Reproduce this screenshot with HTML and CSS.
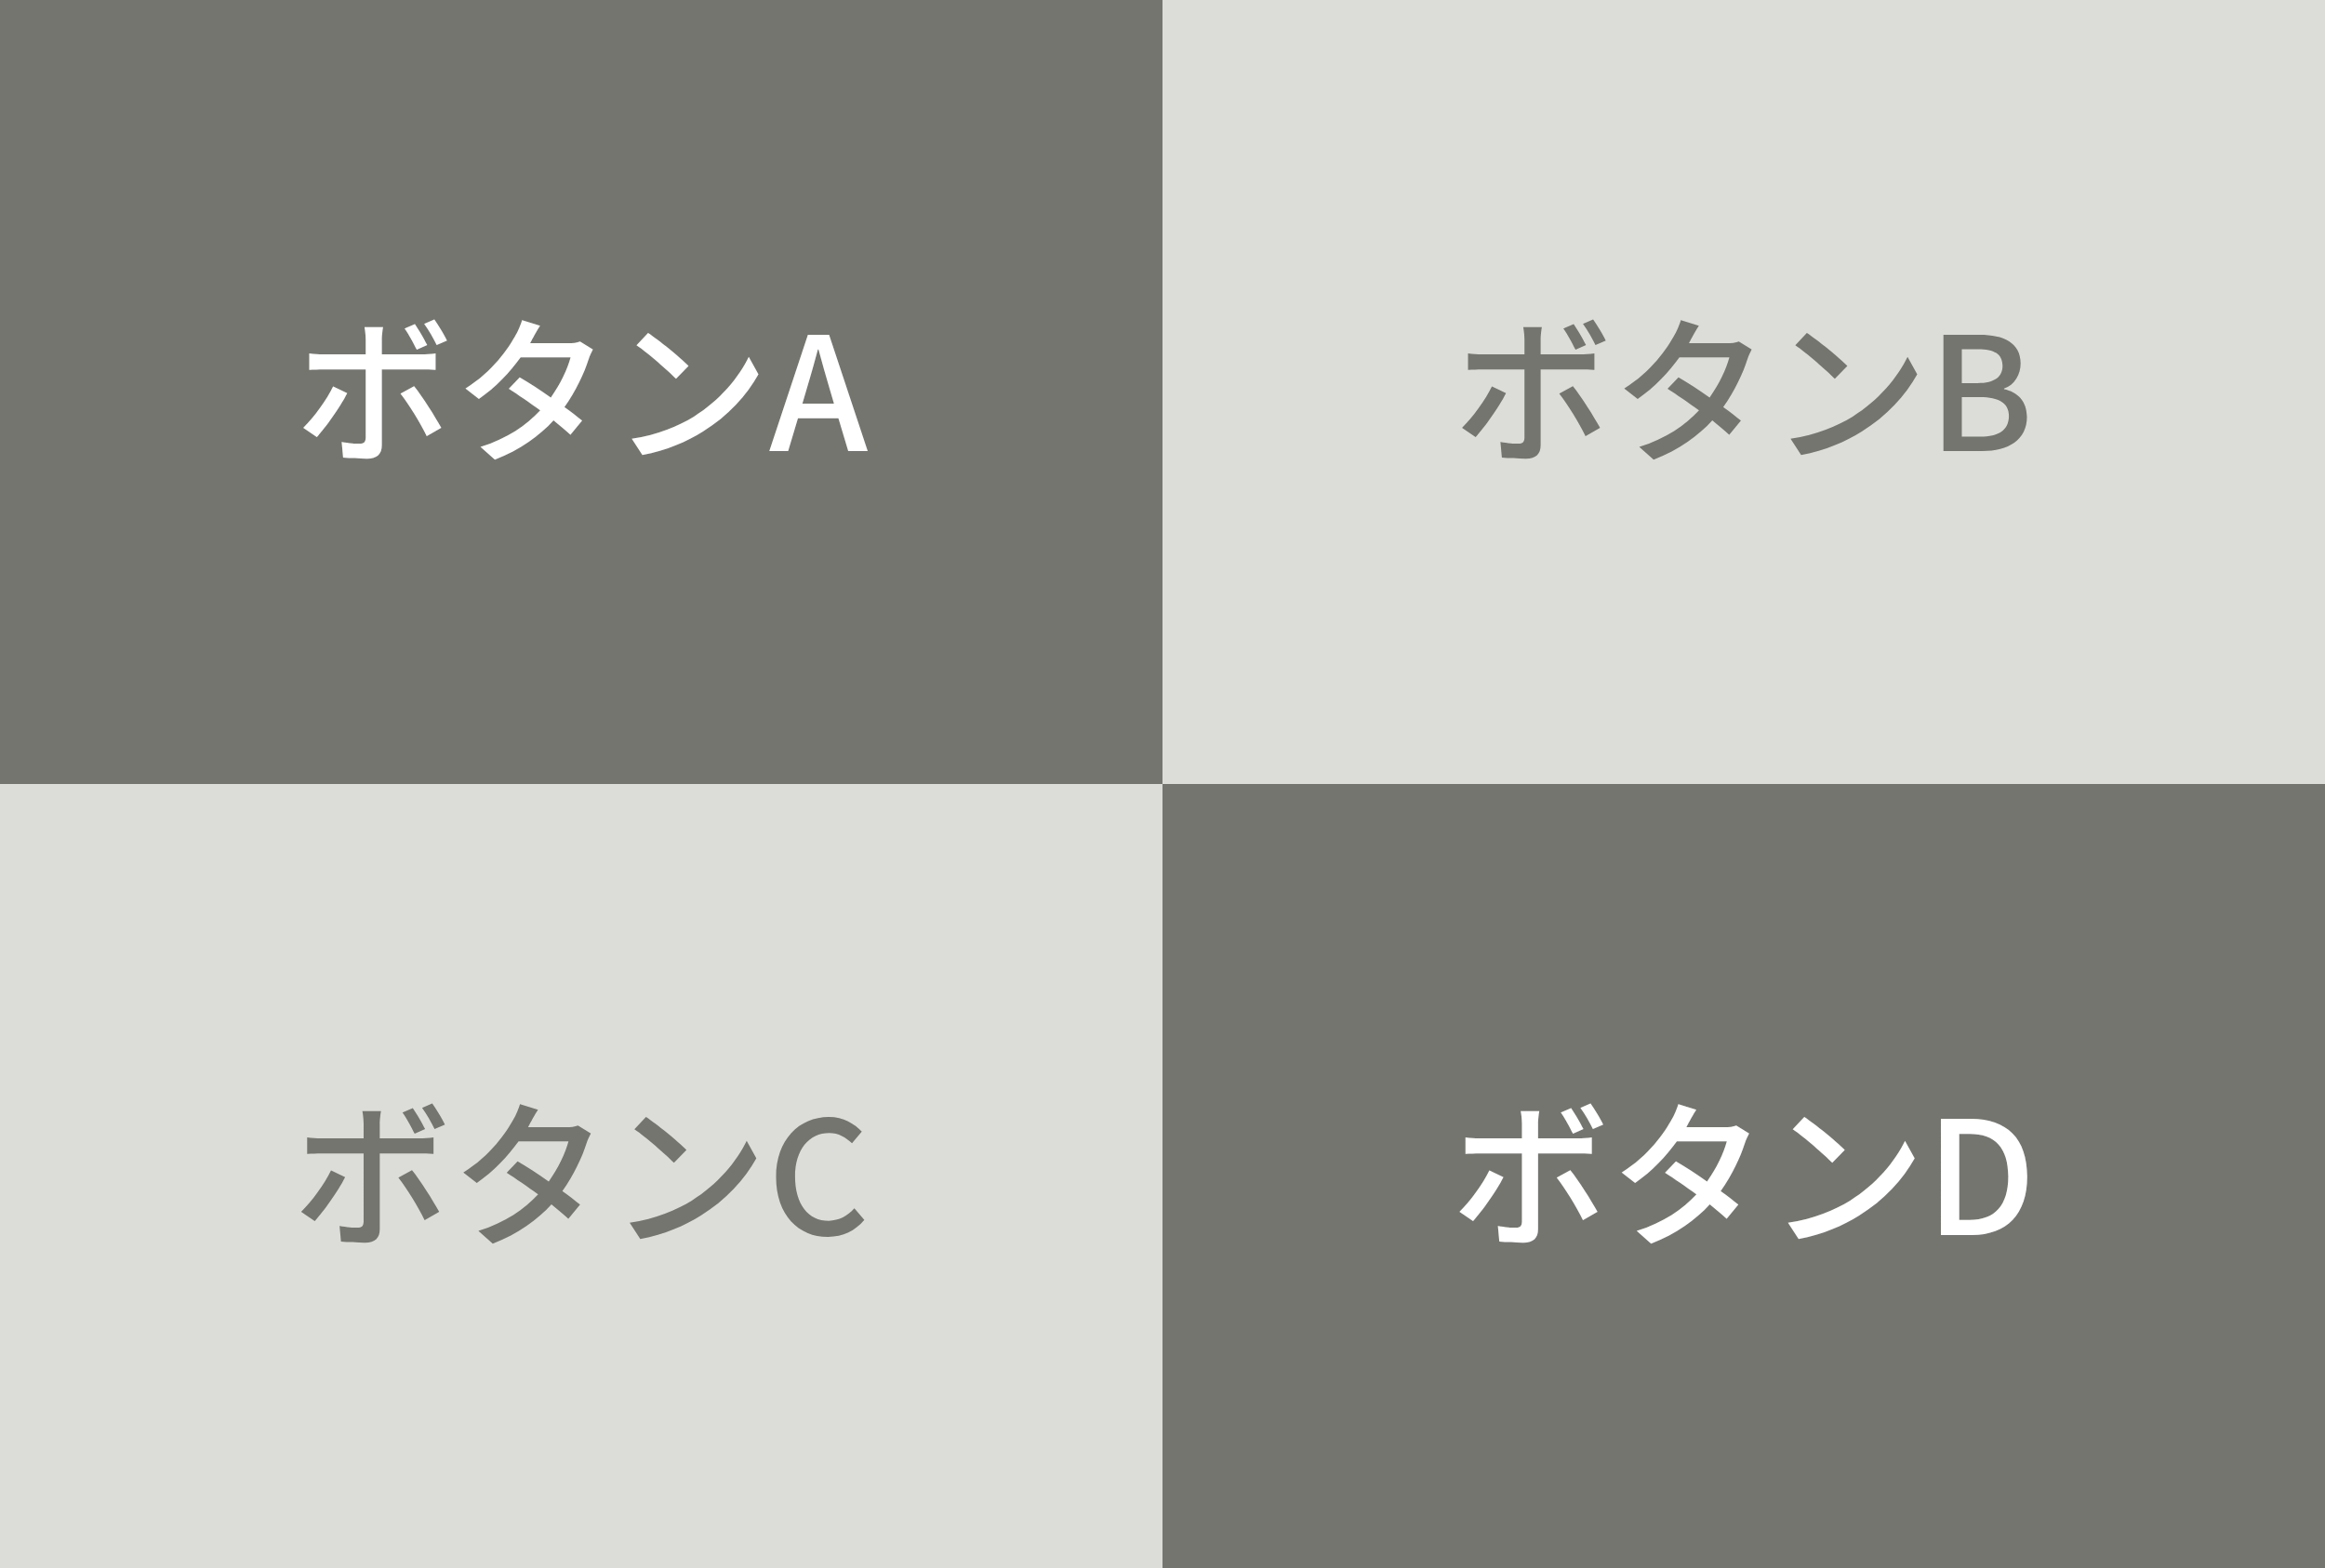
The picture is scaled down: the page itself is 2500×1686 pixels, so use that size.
FILE: index.html
```html
<!DOCTYPE html>
<html lang="ja">
<head>
<meta charset="utf-8">
<title>ボタン</title>
<link rel="stylesheet" href="styles.css">
</head>
<body>
<main class="grid">
  <button class="cell dark">ボタンA</button>
  <button class="cell light">ボタンB</button>
  <button class="cell light">ボタンC</button>
  <button class="cell dark">ボタンD</button>
</main>
</body>
</html>
```
FILE: styles.css
```css
html, body {
  margin: 0;
  padding: 0;
  width: 2500px;
  height: 1686px;
  overflow: hidden;
}
.grid {
  display: grid;
  grid-template-columns: 1250px 1250px;
  grid-template-rows: 843px 843px;
  width: 2500px;
  height: 1686px;
}
.cell {
  display: flex;
  align-items: center;
  justify-content: center;
  border: 0;
  margin: 0;
  padding: 0 0 22px 0;
  font-family: "Noto Sans CJK JP", "Noto Sans", sans-serif;
  font-size: 170px;
  font-weight: 500;
  line-height: 1;
}
.dark {
  background: #74756f;
  color: #ffffff;
}
.light {
  background: #dcddd8;
  color: #74756f;
}
```
